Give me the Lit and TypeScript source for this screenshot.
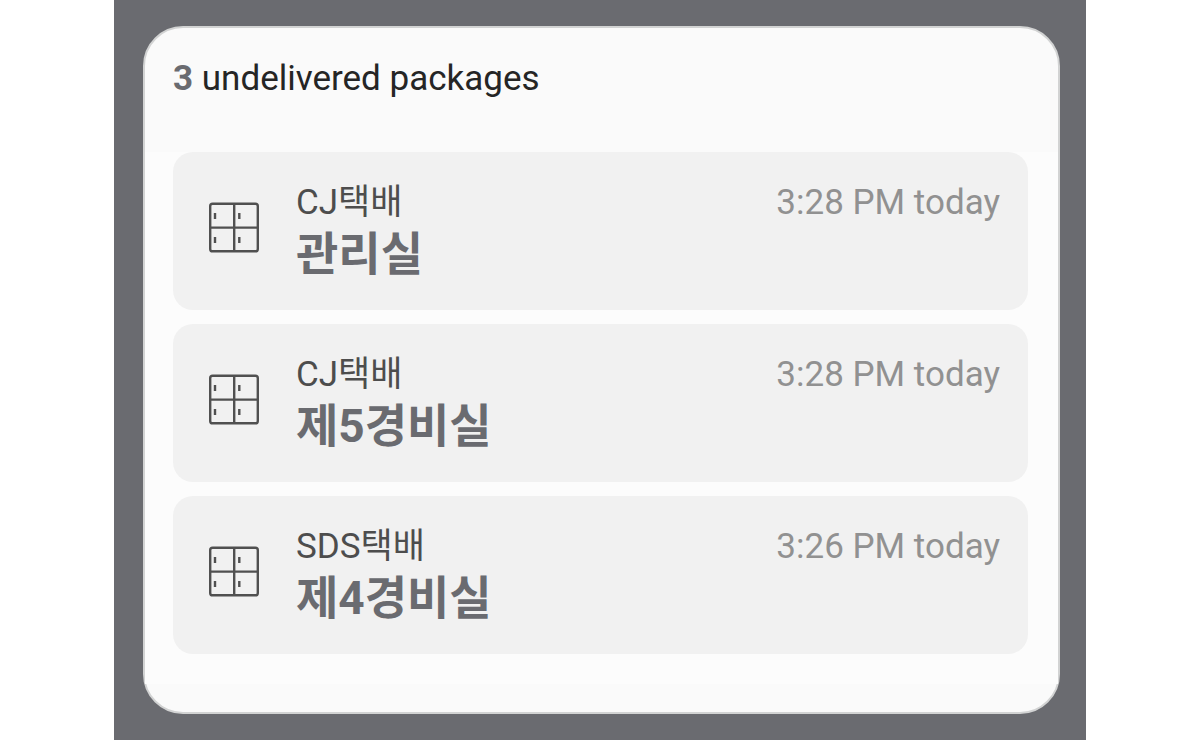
import { LitElement, html, css } from "lit";
import { customElement, property } from "lit/decorators.js";

interface Parcel {
  carrier: string;
  place: string;
  time: string;
}

const PARCELS: Parcel[] = [
  { carrier: "CJ택배", place: "관리실", time: "3:28 PM today" },
  { carrier: "CJ택배", place: "제5경비실", time: "3:28 PM today" },
  { carrier: "SDS택배", place: "제4경비실", time: "3:26 PM today" },
];

@customElement("parcel-row")
export class ParcelRow extends LitElement {
  @property({ attribute: false }) parcel!: Parcel;

  static styles = css`
    :host {
      display: block;
    }
    .row {
      display: flex;
      align-items: flex-start;
      padding: 29px 28px 27px 35px;
      border-radius: 20px;
      background: #f1f1f1;
    }
    .icon {
      flex: none;
      width: 52px;
      height: 52px;
      margin: 21px 36px 0 0;
    }
    .body {
      flex: 1;
      min-width: 0;
    }
    .carrier {
      font-size: 35px;
      line-height: 44px;
      color: #4d4d4d;
    }
    .place {
      font-size: 46px;
      line-height: 58px;
      font-weight: 700;
      color: #6a6b70;
    }
    .time {
      font-size: 35px;
      line-height: 44px;
      color: #919191;
      white-space: nowrap;
    }
  `;

  render() {
    return html`
      <div class="row">
        <svg class="icon" viewBox="0 0 52 52" fill="none" stroke="#505050" stroke-width="2.4" aria-hidden="true">
          <rect x="2.2" y="1.7" width="47.6" height="47.6" rx="2.4" />
          <path d="M26.2 2V49M2 25.6H50" />
          <path d="M7 11V17M31.3 11V17M7 35V41M31.3 35V41" />
        </svg>
        <div class="body">
          <div class="carrier">${this.parcel.carrier}</div>
          <div class="place">${this.parcel.place}</div>
        </div>
        <div class="time">${this.parcel.time}</div>
      </div>
    `;
  }
}

@customElement("app-root")
export class AppRoot extends LitElement {
  static styles = css`
    :host {
      display: block;
      box-sizing: border-box;
      min-height: 100vh;
      padding: 0 114px;
      background: #ffffff;
      font-family: Roboto, "Noto Sans CJK KR", sans-serif;
    }
    .screen {
      box-sizing: border-box;
      min-height: 100vh;
      padding: 26px 26px 26px 29px;
      background: #6a6b70;
    }
    .card {
      padding-bottom: 28px;
      border: 2px solid #d2d3d3;
      border-radius: 40px;
      background: #fafafa;
    }
    .title {
      margin: 0;
      padding: 29px 28px 51px;
      font-size: 35px;
      line-height: 44px;
      font-weight: 400;
      color: #252525;
    }
    .count {
      font-weight: 700;
      color: #6a6b70;
    }
    .list {
      display: grid;
      gap: 14px;
      margin: 0;
      padding: 0 30px 30px 28px;
      list-style: none;
      background: #fcfcfc;
    }
  `;

  render() {
    return html`
      <main class="screen">
        <section class="card">
          <h1 class="title"><span class="count">${PARCELS.length}</span> undelivered packages</h1>
          <ul class="list">
            ${PARCELS.map((p) => html`<li><parcel-row .parcel=${p}></parcel-row></li>`)}
          </ul>
        </section>
      </main>
    `;
  }
}
